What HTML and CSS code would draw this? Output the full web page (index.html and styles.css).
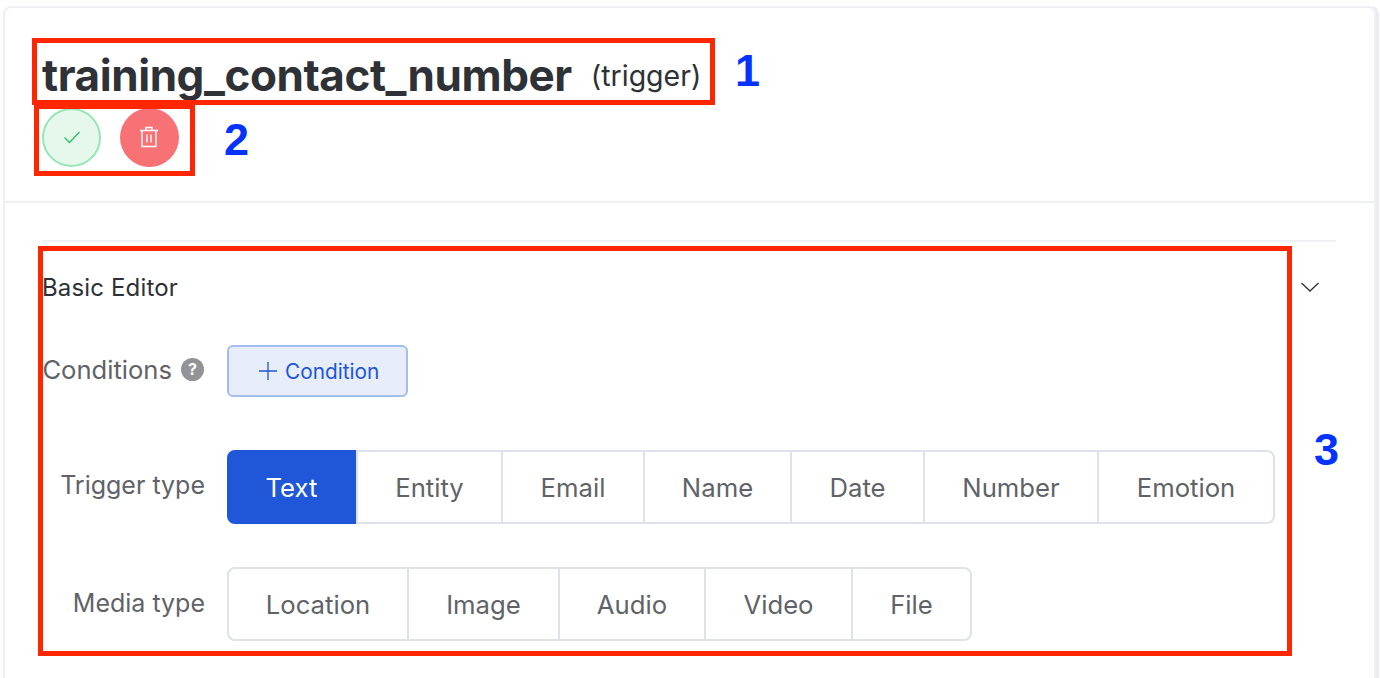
FILE: index.html
```html
<!DOCTYPE html>
<html lang="en">
<head>
    <meta charset="UTF-8">
    <meta name="viewport" content="width=device-width, initial-scale=1.0">
    <title>training_contact_number</title>
    <link rel="stylesheet" href="styles.css">
</head>
<body>
    <div class="card">
        <div class="card-header">
            <h1 class="title">training_contact_number <span class="title-kind">(trigger)</span></h1>
            <div class="actions">
                <button class="round-btn round-ok" type="button">
                    <svg width="20" height="20" viewBox="0 0 20 20" fill="none" stroke="#22c55e" stroke-width="1.3"><path d="M2.5 10.5l5 5 10-10.5"/></svg>
                </button>
                <button class="round-btn round-delete" type="button">
                    <svg width="20" height="22" viewBox="0 0 20 22" fill="none" stroke="#fff" stroke-width="1.4"><path d="M1 4.5h18M7 4.5V1.5h6v3M3 4.5v16h14v-16M8 8.5v8M12 8.5v8"/></svg>
                </button>
            </div>
        </div>
        <div class="card-body">
            <div class="section">
                <div class="section-head">
                    <span class="section-title">Basic Editor</span>
                    <svg class="chevron" width="20" height="12" viewBox="0 0 20 12" fill="none" stroke="#333" stroke-width="1.3"><path d="M1.5 2l8.5 8 8.5-8"/></svg>
                </div>
                <div class="row row-conditions">
                    <div class="row-label">Conditions
                        <span class="help">?</span>
                    </div>
                    <button class="add-btn" type="button">
                        <svg width="18" height="18" viewBox="0 0 18 18" fill="none" stroke="#1d56d9" stroke-width="1.3"><path d="M9 0v18M0 9h18"/></svg>
                        Condition
                    </button>
                </div>
                <div class="row row-trigger">
                    <div class="row-label">Trigger type</div>
                    <div class="segments">
                        <div class="segment seg-active seg-text">Text</div>
                        <div class="segment seg-entity">Entity</div>
                        <div class="segment seg-email">Email</div>
                        <div class="segment seg-name">Name</div>
                        <div class="segment seg-date">Date</div>
                        <div class="segment seg-number">Number</div>
                        <div class="segment seg-emotion">Emotion</div>
                    </div>
                </div>
                <div class="row row-media">
                    <div class="row-label">Media type</div>
                    <div class="segments">
                        <div class="segment seg-location">Location</div>
                        <div class="segment seg-image">Image</div>
                        <div class="segment seg-audio">Audio</div>
                        <div class="segment seg-video">Video</div>
                        <div class="segment seg-file">File</div>
                    </div>
                </div>
            </div>
        </div>
    </div>

    <!-- annotations drawn over the screenshot -->
    <div class="note-box note-box-1"></div>
    <div class="note-box note-box-2"></div>
    <div class="note-box note-box-3"></div>
    <span class="note-num note-num-1">1</span>
    <span class="note-num note-num-2">2</span>
    <span class="note-num note-num-3">3</span>
</body>
</html>
```

FILE: styles.css
```css
* {
    box-sizing: border-box;
}

html, body {
    height: 100%;
}

body {
    margin: 0;
    padding: 6px 4px 0 3px;
    background-color: #fff;
    font-family: Inter, "Liberation Sans", sans-serif;
    color: #2e3136;
    overflow: hidden;
}

.card {
    height: 700px;
    border: 2px solid #eef0f6;
    border-radius: 8px;
    box-shadow: 3px 0 0 #ebecf2;
}

.card-header {
    height: 195px;
    padding: 40px 0 0 37px;
    border-bottom: 2px solid #eef0f6;
}

.title {
    margin: 0;
    height: 54px;
    font-size: 44px;
    line-height: 54px;
    font-weight: 700;
    color: #2e3136;
    letter-spacing: -0.43px;
    white-space: nowrap;
}

.title-kind {
    margin-left: 9px;
    font-size: 28.5px;
    font-weight: 400;
    letter-spacing: 0;
    vertical-align: 5px;
}

.actions {
    display: flex;
    gap: 19px;
    margin-top: 6px;
}

.round-btn {
    display: flex;
    align-items: center;
    justify-content: center;
    width: 59px;
    height: 59px;
    padding: 0 0 2px;
    border-radius: 50%;
    border: none;
}

.round-ok {
    background-color: #e6f8ec;
    border: 2px solid #94e6b3;
}

.round-delete {
    padding-right: 2px;
    background-color: #f87174;
}

.card-body {
    padding: 37px 38px 0 37px;
}

.section {
    border-top: 2px solid #eef0f6;
}

.section-head {
    display: flex;
    align-items: center;
    justify-content: space-between;
    height: 89px;
    margin-bottom: 14px;
}

.section-title {
    padding-top: 1px;
    font-size: 24px;
    font-weight: 400;
    letter-spacing: 0.15px;
}

.chevron {
    margin-right: 16px;
}

.row {
    display: flex;
    align-items: center;
}

.row-label {
    width: 163px;
    flex: none;
    display: flex;
    align-items: center;
    justify-content: flex-end;
    gap: 9px;
    font-size: 25px;
    color: #5f6368;
    white-space: nowrap;
}

.row-conditions {
    height: 52px;
    margin-bottom: 53px;
}

.row-conditions .row-label {
    width: 162px;
    margin-bottom: 4px;
    font-size: 25.6px;
}

.row-conditions .add-btn {
    margin-left: 23px;
}

.row-trigger {
    margin-bottom: 43px;
}

.row-trigger .row-label {
    margin-bottom: 4px;
}

.row-media .row-label {
    margin-bottom: 2px;
}

.help {
    display: flex;
    align-items: center;
    justify-content: center;
    width: 23px;
    height: 23px;
    border-radius: 50%;
    background-color: #929397;
    color: #fff;
    font-size: 16px;
    font-weight: 700;
}

.add-btn {
    display: flex;
    align-items: center;
    gap: 8px;
    width: 181px;
    height: 52px;
    margin-left: 22px;
    padding: 0 0 0 30px;
    background-color: #e8edfb;
    border: 2px solid #a4bdef;
    border-radius: 6px;
    color: #1d56d9;
    font-family: inherit;
    font-size: 20.8px;
}

.segments {
    display: flex;
    height: 74px;
    margin-left: 22px;
    border: 2px solid #dfe2ea;
    border-radius: 8px;
}

.segment {
    display: flex;
    align-items: center;
    justify-content: center;
    font-size: 25.7px;
    color: #5f6368;
    border-left: 2px solid #dfe2ea;
}

.segment:first-child {
    border-left: none;
}

.seg-active {
    margin: -2px 0 -2px -2px;
    background-color: #1f57d8;
    color: #fff;
    border-radius: 8px 0 0 8px;
}

.seg-text { width: 129px; }
.seg-entity { width: 145px; }
.seg-email { width: 142px; }
.seg-name { width: 147px; }
.seg-date { width: 133px; }
.seg-number { width: 174px; }
.seg-emotion { width: 176px; }

.seg-location { width: 178px; }
.seg-image { width: 151px; }
.seg-audio { width: 146px; }
.seg-video { width: 147px; }
.seg-file { width: 119px; }

/* annotations */
.note-box {
    position: absolute;
    border: 5px solid #ff2600;
}

.note-box-1 {
    left: 32px;
    top: 38px;
    width: 683px;
    height: 67px;
}

.note-box-2 {
    left: 34px;
    top: 104px;
    width: 161px;
    height: 72px;
}

.note-box-3 {
    left: 38px;
    top: 246px;
    width: 1254px;
    height: 410px;
}

.note-num {
    position: absolute;
    font-family: "Liberation Sans", Arial, sans-serif;
    font-size: 45px;
    line-height: 46px;
    font-weight: 700;
    color: #0433ff;
}

.note-num-1 {
    left: 735px;
    top: 48px;
}

.note-num-2 {
    left: 224px;
    top: 117px;
}

.note-num-3 {
    left: 1314px;
    top: 427px;
}
```
